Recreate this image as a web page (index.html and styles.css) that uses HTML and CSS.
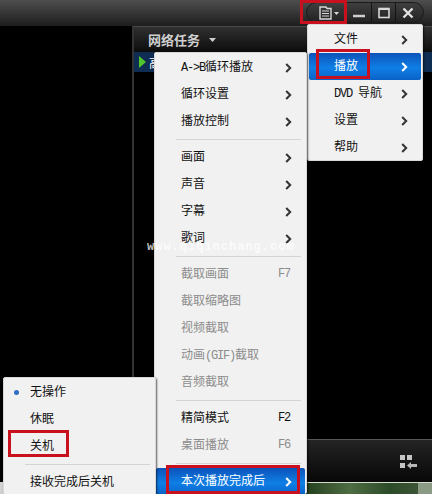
FILE: index.html
```html
<!DOCTYPE html>
<html lang="zh">
<head>
<meta charset="utf-8">
<title>播放菜单</title>
<link rel="stylesheet" href="styles.css">
</head>
<body>
<div class="app">
  <header class="titlebar">
    <div class="controls">
      <div class="ctl ctl-menu">
        <svg width="21" height="14" viewBox="0 0 21 14"><path d="M1 1h6l1 1.500h4V13H1z" fill="none" stroke="#d8d8d8" stroke-width="1.400"/><path d="M3 5h7M3 7.500h7M3 10h7" stroke="#d8d8d8" stroke-width="1.200"/><path d="M15 6h5l-2.500 3z" fill="#d8d8d8"/></svg>
      </div>
      <div class="ctl"><svg width="14" height="14" viewBox="0 0 14 14"><path d="M1 10h12" stroke="#cfcfcf" stroke-width="2.400"/></svg></div>
      <div class="ctl"><svg width="14" height="14" viewBox="0 0 14 14"><rect x="2" y="2.500" width="10" height="9" fill="none" stroke="#d8d8d8" stroke-width="1.600"/><path d="M2 3h10" stroke="#d8d8d8" stroke-width="2"/></svg></div>
      <div class="ctl ctl-last"><svg width="14" height="14" viewBox="0 0 14 14"><path d="M2.500 2.500l9 9M11.500 2.500l-9 9" stroke="#e2e2e2" stroke-width="2.400"/></svg></div>
    </div>
  </header>
  <main class="body">
    <div class="video"></div>
    <section class="panel">
      <div class="panel-head"><span class="panel-title">网络任务</span><svg class="caret" width="7" height="4" viewBox="0 0 7 4"><path d="M0 0h7L3.500 4z" fill="#cfcfcf"/></svg></div>
      <div class="task"><svg width="7" height="12" viewBox="0 0 7 12"><path d="M0 0l7 6-7 6z" fill="#4fc62c"/></svg><span>高</span></div>
      <div class="panel-fill"></div>
      <div class="panel-foot">
        <svg width="18" height="15" viewBox="0 0 18 15"><path d="M0 0h5v5H0zM7 0h5v5H7zM0 8h5v5H0z" fill="#c4c4c4"/><path d="M7 10.500l4-3.500v2h6v3h-6v2z" fill="#b8b8b8"/></svg>
      </div>
    </section>
  </main>
  <div class="strip"></div>

  <nav class="menu menu-top">
    <div class="item"><span class="label">文件</span><svg class="arrow" width="7" height="10" viewBox="0 0 7 10"><path d="M1.200 1l4 4-4 4" fill="none" stroke="#333" stroke-width="2"/></svg></div>
    <div class="item active"><span class="label">播放</span><svg class="arrow" width="7" height="10" viewBox="0 0 7 10"><path d="M1.200 1l4 4-4 4" fill="none" stroke="#fff" stroke-width="2"/></svg></div>
    <div class="item"><span class="label"><span class="lat">DVD </span>导航</span><svg class="arrow" width="7" height="10" viewBox="0 0 7 10"><path d="M1.200 1l4 4-4 4" fill="none" stroke="#333" stroke-width="2"/></svg></div>
    <div class="item"><span class="label">设置</span><svg class="arrow" width="7" height="10" viewBox="0 0 7 10"><path d="M1.200 1l4 4-4 4" fill="none" stroke="#333" stroke-width="2"/></svg></div>
    <div class="item"><span class="label">帮助</span><svg class="arrow" width="7" height="10" viewBox="0 0 7 10"><path d="M1.200 1l4 4-4 4" fill="none" stroke="#333" stroke-width="2"/></svg></div>
  </nav>

  <nav class="menu menu-main">
    <div class="item"><span class="label"><span class="lat">A-&gt;B</span>循环播放</span><svg class="arrow" width="7" height="10" viewBox="0 0 7 10"><path d="M1.200 1l4 4-4 4" fill="none" stroke="#333" stroke-width="2"/></svg></div>
    <div class="item"><span class="label">循环设置</span><svg class="arrow" width="7" height="10" viewBox="0 0 7 10"><path d="M1.200 1l4 4-4 4" fill="none" stroke="#333" stroke-width="2"/></svg></div>
    <div class="item"><span class="label">播放控制</span><svg class="arrow" width="7" height="10" viewBox="0 0 7 10"><path d="M1.200 1l4 4-4 4" fill="none" stroke="#333" stroke-width="2"/></svg></div>
    <div class="sep"></div>
    <div class="item"><span class="label">画面</span><svg class="arrow" width="7" height="10" viewBox="0 0 7 10"><path d="M1.200 1l4 4-4 4" fill="none" stroke="#333" stroke-width="2"/></svg></div>
    <div class="item"><span class="label">声音</span><svg class="arrow" width="7" height="10" viewBox="0 0 7 10"><path d="M1.200 1l4 4-4 4" fill="none" stroke="#333" stroke-width="2"/></svg></div>
    <div class="item"><span class="label">字幕</span><svg class="arrow" width="7" height="10" viewBox="0 0 7 10"><path d="M1.200 1l4 4-4 4" fill="none" stroke="#333" stroke-width="2"/></svg></div>
    <div class="item"><span class="label">歌词</span><svg class="arrow" width="7" height="10" viewBox="0 0 7 10"><path d="M1.200 1l4 4-4 4" fill="none" stroke="#333" stroke-width="2"/></svg></div>
    <div class="sep"></div>
    <div class="item off"><span class="label">截取画面</span><span class="key">F7</span></div>
    <div class="item off"><span class="label">截取缩略图</span></div>
    <div class="item off"><span class="label">视频截取</span></div>
    <div class="item off"><span class="label">动画<span class="lat">(GIF)</span>截取</span></div>
    <div class="item off"><span class="label">音频截取</span></div>
    <div class="sep"></div>
    <div class="item"><span class="label">精简模式</span><span class="key">F2</span></div>
    <div class="item off"><span class="label">桌面播放</span><span class="key">F6</span></div>
    <div class="sep"></div>
    <div class="item active"><span class="label">本次播放完成后</span><svg class="arrow" width="7" height="10" viewBox="0 0 7 10"><path d="M1.200 1l4 4-4 4" fill="none" stroke="#fff" stroke-width="2"/></svg></div>
  </nav>

  <nav class="menu menu-left">
    <div class="item"><span class="dot"></span><span class="label">无操作</span></div>
    <div class="item"><span class="label">休眠</span></div>
    <div class="item"><span class="label">关机</span></div>
    <div class="sep"></div>
    <div class="item"><span class="label">接收完成后关机</span></div>
  </nav>

  <div class="watermark">www.qiqinchang.com</div>

  <div class="mark mark-title"></div>
  <div class="mark mark-play"></div>
  <div class="mark mark-off"></div>
  <div class="mark mark-after"></div>
</div>
</body>
</html>
```

FILE: styles.css
```css
* { box-sizing: border-box; }
html, body { margin: 0; padding: 0; }
body {
  width: 432px;
  height: 494px;
  overflow: hidden;
  background: #000;
  font-family: "Noto Sans CJK SC", "Liberation Sans", sans-serif;
  font-size: 12px;
}
.app {
  position: relative;
  width: 432px;
  height: 494px;
  display: flex;
  flex-direction: column;
  overflow: hidden;
}

/* title bar */
.titlebar {
  height: 26px;
  flex: none;
  display: flex;
  justify-content: flex-end;
  align-items: flex-start;
  padding: 2px 8px 0 0;
  background: linear-gradient(#4e4e4e, #1d1d1d);
}
.controls {
  display: flex;
  height: 21px;
  width: 118px;
  border-radius: 11px;
  border: 1px solid #1a1a1a;
  background: linear-gradient(#3f3f3f, #222);
  overflow: hidden;
}
.ctl {
  flex: 1;
  display: flex;
  align-items: center;
  justify-content: center;
  border-right: 1px solid #141414;
}
.ctl-menu { flex: 0 0 40px; padding-left: 5px; }
.ctl-last { border-right: 0; padding-right: 3px; }

/* main */
.body { flex: 1; display: flex; min-height: 0; }
.video { width: 132px; flex: none; background: #000; }
.panel {
  flex: 1;
  display: flex;
  flex-direction: column;
  border-left: 2px solid #333;
  border-top: 1px solid #4a4a4a;
  background: #000;
}
.panel-head {
  height: 25px;
  flex: none;
  display: flex;
  align-items: center;
  gap: 9px;
  padding-left: 14px;
  background: linear-gradient(#303030, #0c0c0c);
}
.panel-title { color: #cfcfcf; font-weight: 700; font-size: 13px; }
.task {
  height: 20px;
  flex: none;
  display: flex;
  align-items: center;
  gap: 3px;
  padding-left: 5px;
  background: #0f2c52;
  color: #fff;
}
.panel-fill { flex: 1; }
.panel-foot {
  height: 43px;
  flex: none;
  display: flex;
  align-items: center;
  justify-content: flex-end;
  padding: 2px 14px 0 0;
  border-top: 1px solid #555;
  background: linear-gradient(#242424, #070707);
}
.strip {
  height: 12px;
  flex: none;
  border-top: 1px solid #d5dcd0;
  background: linear-gradient(90deg, #d0d0d0 3px, #1e3a1a 3px, #1e3a1a 300px, #4f6d43 350px, #2b4b28 390px, #3d5537 418px, #8a9a84 418px);
}

/* menus */
.menu {
  position: absolute;
  padding: 1px 1px 0;
  background: #f1f1f1;
  border: 1px solid #d8d8d8;
  border-radius: 2px;
  color: #111;
  box-shadow: 1px 1px 2px rgba(0, 0, 0, 0.600);
}
.menu-top { left: 307px; top: 24px; width: 116px; height: 137px; }
.menu-main { left: 154px; top: 52px; width: 153px; height: 442px; }
.menu-left { left: 3px; top: 377px; width: 153px; height: 118px; }
.item {
  position: relative;
  display: flex;
  align-items: center;
  justify-content: space-between;
  height: 27px;
  padding: 0 13px 0 25px;
  white-space: nowrap;
}
.item.off { color: #8c8c8c; }
.item.active {
  color: #fff;
  border-radius: 2px;
  background: linear-gradient(#0c52b8, #0f7fe6 55%, #0a62c8);
}
.label { margin-bottom: 4px; }
.lat { font-family: "Liberation Mono", monospace; font-size: 12px; letter-spacing: -1.200px; white-space: pre; }
.key { font-family: "Liberation Mono", monospace; font-size: 12px; letter-spacing: -1.200px; margin: 0 2px 2px 0; }
.dot {
  position: absolute;
  left: 9px;
  top: 11px;
  width: 5px;
  height: 5px;
  border-radius: 50%;
  background: #2f6fc0;
}
.sep {
  height: 1px;
  margin: 4px 4px 4px 20px;
  background: #d4d4d4;
}

/* watermark */
.watermark {
  position: absolute;
  left: 147px;
  top: 241px;
  font-family: "Liberation Mono", monospace;
  font-size: 12px;
  line-height: 12px;
  font-weight: 700;
  letter-spacing: 1px;
  color: #fff;
  opacity: 0.750;
  white-space: nowrap;
}

/* red call-outs */
.mark { position: absolute; border: 3px solid #c9101f; }
.mark-title { left: 300px; top: 0; width: 47px; height: 24px; }
.mark-play { left: 316px; top: 49px; width: 54px; height: 30px; }
.mark-off { left: 8px; top: 430px; width: 61px; height: 27px; }
.mark-after { left: 166px; top: 465px; width: 134px; height: 29px; }
```
